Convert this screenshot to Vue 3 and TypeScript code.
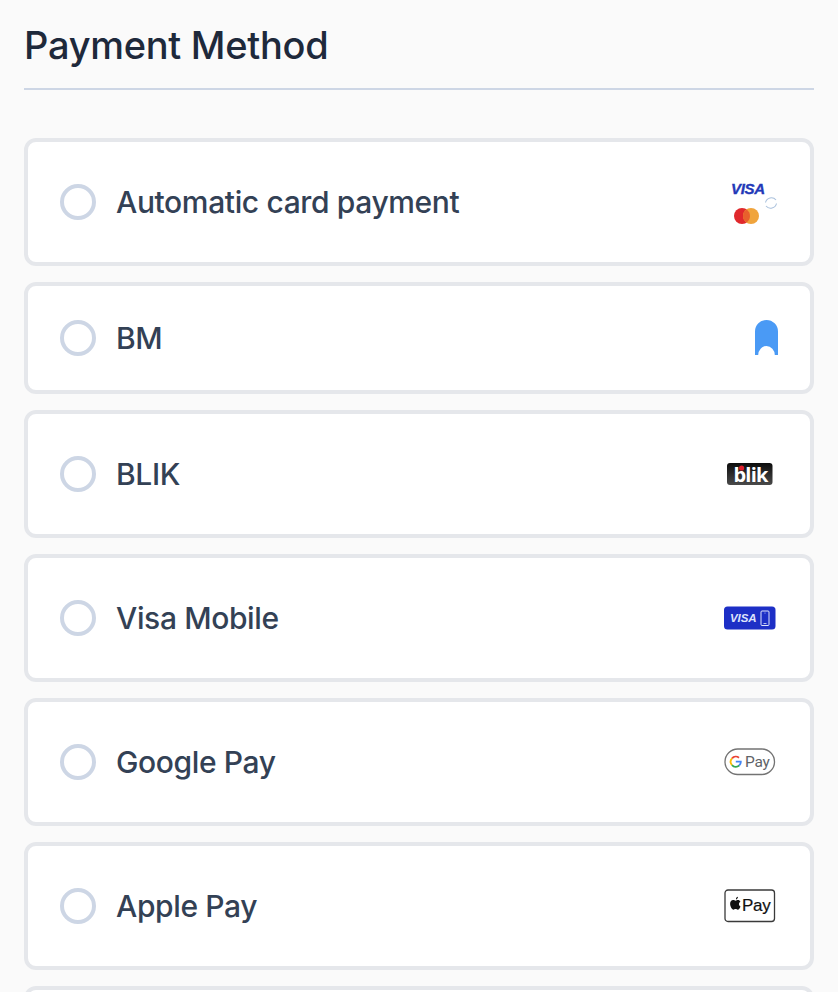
<script setup lang="ts">
interface Method {
  id: string
  label: string
}

const methods: Method[] = [
  { id: 'card', label: 'Automatic card payment' },
  { id: 'bm', label: 'BM' },
  { id: 'blik', label: 'BLIK' },
  { id: 'visa', label: 'Visa Mobile' },
  { id: 'gpay', label: 'Google Pay' },
  { id: 'apple', label: 'Apple Pay' },
  { id: 'more', label: '' }
]
</script>

<template>
  <main class="page">
    <header class="head">
      <h1 class="title">Payment Method</h1>
    </header>
    <section class="list">
      <label v-for="m in methods" :key="m.id" class="card" :class="`card-${m.id}`">
        <span class="radio"></span>
        <span class="label">{{ m.label }}</span>
        <span class="logo">
          <svg v-if="m.id === 'card'" width="52" height="56" viewBox="0 0 52 56">
            <text x="5" y="19.500" font-family="Liberation Sans" font-weight="700" font-style="italic" font-size="15" letter-spacing="-0.3" fill="#2238b8" stroke="#2238b8" stroke-width="0.35">VISA</text>
            <circle cx="16" cy="42" r="8" fill="#e0282c" />
            <circle cx="25" cy="42" r="8" fill="#f0a43c" />
            <path d="M20.500 35.400a8 8 0 0 1 0 13.200a8 8 0 0 1 0-13.200z" fill="#e8602c" />
            <path d="M39.500 28.500a6 6 0 0 1 10.500-2.500M50.500 29.500a6 6 0 0 1-10.500 2.500" fill="none" stroke="#a9c0dc" stroke-width="1.100" />
          </svg>
          <svg v-else-if="m.id === 'bm'" width="23" height="36" viewBox="0 0 23 36">
            <path d="M0 35V11.500a11.500 11.500 0 0 1 23 0V35h-3.200a8.300 9 0 0 0-16.600 0z" fill="#4a9af5" />
          </svg>
          <svg v-else-if="m.id === 'blik'" width="51" height="32" viewBox="0 0 51 32">
            <defs>
              <linearGradient id="blikBg" x1="0" y1="0" x2="0" y2="1">
                <stop offset="0" stop-color="#0c0c0c" />
                <stop offset="1" stop-color="#4a4a4a" />
              </linearGradient>
            </defs>
            <rect x="0" y="5" width="45.500" height="22" rx="3" fill="url(#blikBg)" />
            <text x="6.500" y="24" font-family="Open Sans" font-weight="700" font-size="20" letter-spacing="-0.8" fill="#fff">blik</text>
            <circle cx="14.600" cy="10" r="2.600" fill="#e0202e" />
          </svg>
          <svg v-else-if="m.id === 'visa'" width="54" height="24" viewBox="0 0 54 24">
            <rect x="0" y="0.500" width="51.500" height="23" rx="3.500" fill="#1d2fc6" />
            <text x="6" y="16" font-family="Liberation Sans" font-weight="700" font-style="italic" font-size="11.500" letter-spacing="-0.1" fill="#dfe4fb">VISA</text>
            <rect x="37" y="5" width="8" height="14.500" rx="1" fill="none" stroke="#dfe4fb" stroke-width="1" />
            <circle cx="41" cy="7" r="0.500" fill="#dfe4fb" />
            <path d="M39.500 17.500h3" stroke="#dfe4fb" stroke-width="0.800" />
          </svg>
          <svg v-else-if="m.id === 'gpay'" width="54" height="28" viewBox="0 0 54 28">
            <rect x="1" y="1" width="49.500" height="25.500" rx="12.700" fill="#fff" stroke="#737373" stroke-width="1.300" />
            <path d="M15 9.700a5.200 5.200 0 0 0-7 .6" fill="none" stroke="#ea4335" stroke-width="1.800" />
            <path d="M8 10.300a5.200 5.200 0 0 0 0 6.800" fill="none" stroke="#fbbc04" stroke-width="1.800" />
            <path d="M8 17.100a5.200 5.200 0 0 0 7.200.4" fill="none" stroke="#34a853" stroke-width="1.800" />
            <path d="M15.200 17.500a5 5 0 0 0 1.600-3.800h-5" fill="none" stroke="#4285f4" stroke-width="1.800" />
            <text x="21" y="19" font-family="Roboto" font-size="15.500" letter-spacing="-0.3" fill="#5f6368">Pay</text>
          </svg>
          <svg v-else-if="m.id === 'apple'" width="54" height="34" viewBox="0 0 54 34">
            <rect x="1" y="1" width="49.500" height="31.500" rx="3" fill="#fff" stroke="#3a3a3a" stroke-width="1.300" />
            <path d="M12 10.400c1-.1 2-1 2-2.600c-1.100.1-2.200 1.200-2 2.600zM14.100 11.100c-1.200 0-1.800.7-2.500.7s-1.500-.7-2.500-.7c-1.600 0-3 1.500-3 3.700c0 2.700 1.900 5.900 3.300 5.900c.9 0 1.200-.6 2.200-.6s1.200.6 2.200.6c1.100 0 2.100-1.700 2.700-3.300c-1.900-.8-2.100-3.700-.1-4.700c-.5-1-1.300-1.600-2.300-1.600z" fill="#111" />
            <text x="18" y="22" font-family="Liberation Sans" font-size="17" letter-spacing="-0.3" fill="#111" stroke="#111" stroke-width="0.2">Pay</text>
          </svg>
        </span>
      </label>
    </section>
  </main>
</template>

<style scoped>
.page {
  box-sizing: border-box;
  height: 992px;
  overflow: hidden;
  padding: 0 24px;
  background: #fafafa;
  font-family: Inter, "Liberation Sans", sans-serif;
}
.head {
  box-sizing: border-box;
  height: 90px;
  padding-top: 2px;
  border-bottom: 2px solid #cdd6e5;
  margin-bottom: 48px;
  display: flex;
  align-items: center;
}
.title {
  margin: 0;
  font-size: 38px;
  font-weight: 550;
  letter-spacing: -0.28px;
  line-height: 44px;
  color: #1e293b;
}
.list {
  display: flex;
  flex-direction: column;
  gap: 16px;
}
.card {
  box-sizing: border-box;
  flex: none;
  height: 128px;
  display: flex;
  align-items: center;
  gap: 20px;
  padding: 0 32px;
  background: #fff;
  border: 4px solid #e5e7eb;
  border-radius: 12px;
}
.card-bm {
  height: 112px;
}
.radio {
  flex: none;
  box-sizing: border-box;
  width: 36px;
  height: 36px;
  border: 4px solid #cdd6e5;
  border-radius: 50%;
}
.label {
  flex: 1;
  font-size: 30px;
  font-weight: 500;
  letter-spacing: -0.37px;
  line-height: 36px;
  color: #334155;
}
.logo {
  flex: none;
  display: flex;
  align-items: center;
  justify-content: flex-end;
}
.logo svg {
  display: block;
}
</style>

<style>
html, body {
  margin: 0;
  overflow: hidden;
  background: #fafafa;
}
</style>
